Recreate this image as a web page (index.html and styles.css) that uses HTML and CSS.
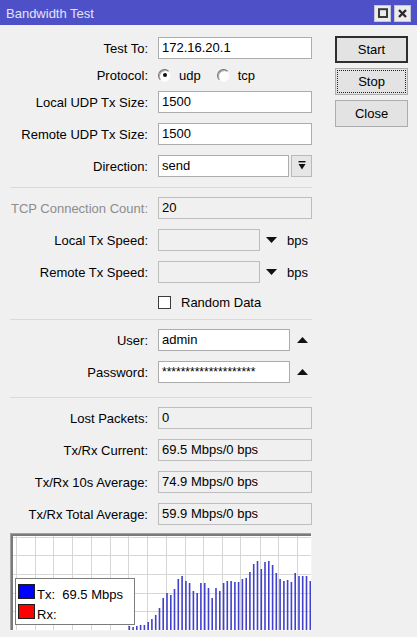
FILE: index.html
```html
<!DOCTYPE html>
<html>
<head>
<meta charset="utf-8">
<title>Bandwidth Test</title>
<link rel="stylesheet" href="styles.css">
</head>
<body>
<div class="window">
  <div class="titlebar">
    <span class="title">Bandwidth Test</span>
    <div class="tb-btns">
      <span class="tb-btn"><svg width="10" height="10" viewBox="0 0 10 10"><rect x="1" y="1.2" width="8" height="7.8" fill="none" stroke="#3a3a3a" stroke-width="2"/></svg></span>
      <span class="tb-btn"><svg width="9" height="9" viewBox="0 0 9 9"><path d="M1 1 L8 8 M8 1 L1 8" stroke="#2a2a2a" stroke-width="2.4"/></svg></span>
    </div>
  </div>
  <div class="content">
    <div class="form">
      <div class="row">
        <div class="label">Test To:</div>
        <div class="field">172.16.20.1</div>
      </div>
      <div class="row short">
        <div class="label">Protocol:</div>
        <span class="radio checked"></span><span class="radio-text">udp</span>
        <span class="radio"></span><span class="radio-text">tcp</span>
      </div>
      <div class="row">
        <div class="label">Local UDP Tx Size:</div>
        <div class="field">1500</div>
      </div>
      <div class="row">
        <div class="label">Remote UDP Tx Size:</div>
        <div class="field">1500</div>
      </div>
      <div class="row">
        <div class="label">Direction:</div>
        <div class="field combo">send</div>
        <div class="drop-btn"><svg width="8" height="10" viewBox="0 0 8 10"><rect x="0.5" y="0" width="7" height="1.4" fill="#111"/><polygon points="0.5,3 7.5,3 4,8.5" fill="#111"/></svg></div>
      </div>
      <div class="sep sep-a"></div>
      <div class="row">
        <div class="label disabled">TCP Connection Count:</div>
        <div class="field ro">20</div>
      </div>
      <div class="row">
        <div class="label">Local Tx Speed:</div>
        <div class="field ro speed"></div>
        <svg class="tri" width="11" height="6" viewBox="0 0 11 6"><polygon points="0,0 11,0 5.5,6" fill="#111"/></svg>
        <span class="unit">bps</span>
      </div>
      <div class="row">
        <div class="label">Remote Tx Speed:</div>
        <div class="field ro speed"></div>
        <svg class="tri" width="11" height="6" viewBox="0 0 11 6"><polygon points="0,0 11,0 5.5,6" fill="#111"/></svg>
        <span class="unit">bps</span>
      </div>
      <div class="row check">
        <div class="label"></div>
        <span class="checkbox"></span><span>Random Data</span>
      </div>
      <div class="sep sep-b"></div>
      <div class="row">
        <div class="label">User:</div>
        <div class="field user">admin</div>
        <svg class="tri up" width="11" height="6" viewBox="0 0 11 6"><polygon points="0,6 11,6 5.5,0" fill="#111"/></svg>
      </div>
      <div class="row">
        <div class="label">Password:</div>
        <div class="field user pass">********************</div>
        <svg class="tri up" width="11" height="6" viewBox="0 0 11 6"><polygon points="0,6 11,6 5.5,0" fill="#111"/></svg>
      </div>
      <div class="sep sep-c"></div>
      <div class="row">
        <div class="label">Lost Packets:</div>
        <div class="field ro">0</div>
      </div>
      <div class="row">
        <div class="label">Tx/Rx Current:</div>
        <div class="field ro">69.5 Mbps/0 bps</div>
      </div>
      <div class="row">
        <div class="label">Tx/Rx 10s Average:</div>
        <div class="field ro">74.9 Mbps/0 bps</div>
      </div>
      <div class="row">
        <div class="label">Tx/Rx Total Average:</div>
        <div class="field ro">59.9 Mbps/0 bps</div>
      </div>
      <div class="graph">
        <svg width="302" height="98" viewBox="0 0 302 98">
          <rect x="0" y="0" width="302" height="98" fill="#ffffff"/>
          <g stroke="#d6d6d6" stroke-width="1">
            <path d="M6.5 0V98M25.5 0V98M43.5 0V98M62.5 0V98M81.5 0V98M100.5 0V98M118.5 0V98M137.5 0V98M156.5 0V98M175.5 0V98M193.5 0V98M212.5 0V98M230.5 0V98M250.5 0V98M268.5 0V98M287.5 0V98"/>
            <path d="M0 4.5H302M0 22.5H302M0 41.5H302M0 60.5H302M0 78.5H302"/>
          </g>
          <g stroke="#4141cc" stroke-width="1.6">
            <path d="M119.3 97V93M123.1 97V94M126.8 97V93M130.6 97V92M134.4 97V92M138.2 97V89M141.9 97V86M145.7 97V82M149.5 97V75M153.2 97V65M157 97V60M160.8 97V62M164.5 97V56M168.3 97V46M172.1 97V43M175.9 97V48M179.6 97V50M183.4 97V58M187.2 97V60M190.9 97V50M194.7 97V50M198.5 97V55M202.2 97V65M206 97V55M209.8 97V58M213.6 97V50M217.3 97V48M221.1 97V48M224.9 97V49M228.6 97V49M232.4 97V46M236.2 97V45M239.9 97V39M243.7 97V31M247.5 97V28M251.3 97V36M255 97V29M258.8 97V28M262.6 97V32M266.3 97V40M270.1 97V46M273.9 97V48M277.6 97V47M281.4 97V49M285.2 97V40M289 97V43M292.7 97V43M296.5 97V43M300.3 97V48"/>
          </g>
          <rect x="0" y="0" width="302" height="1" fill="#a3a3a3"/>
          <rect x="0" y="0" width="1" height="98" fill="#a3a3a3"/>
          <rect x="1" y="1" width="301" height="2" fill="#7a7a7a"/>
          <rect x="1" y="1" width="2" height="97" fill="#7a7a7a"/>
          <rect x="0" y="97" width="302" height="1" fill="#f4f4f4"/>
          <rect x="301" y="0" width="1" height="98" fill="#f4f4f4"/>
        </svg>
        <div class="legend">
          <div class="legend-row"><span class="swatch tx"></span><span class="legend-text">Tx:  69.5 Mbps</span></div>
          <div class="legend-row"><span class="swatch rx"></span><span class="legend-text">Rx:</span></div>
        </div>
      </div>
    </div>
    <div class="actions">
      <button class="btn default">Start</button>
      <button class="btn focused">Stop</button>
      <button class="btn">Close</button>
    </div>
  </div>
</div>
</body>
</html>
```

FILE: styles.css
```css
html, body {
  margin: 0;
  padding: 0;
}
body {
  background: #f0f0f0;
  font-family: "Liberation Sans", Arial, sans-serif;
  font-size: 13px;
  color: #000000;
}
.window {
  width: 417px;
  height: 637px;
  overflow: hidden;
}
.titlebar {
  height: 25px;
  background: #4e50c8;
  display: flex;
  align-items: center;
  padding: 0 6px;
  box-sizing: border-box;
}
.title {
  flex: 1;
  color: #e2e2fb;
  padding-top: 2px;
}
.tb-btns {
  display: flex;
  gap: 3px;
  margin-top: 1px;
}
.tb-btn {
  width: 17px;
  height: 17px;
  box-sizing: border-box;
  background: #ececec;
  border: 1px solid #c4c4d4;
  display: flex;
  align-items: center;
  justify-content: center;
}
.content {
  display: flex;
  padding: 7px 9px 0 10px;
}
.form {
  width: 302px;
  flex-shrink: 0;
}
.actions {
  margin-left: 23px;
  width: 73px;
  padding-top: 4px;
  display: flex;
  flex-direction: column;
  gap: 5px;
}
.row {
  display: flex;
  align-items: center;
  height: 32px;
}
.row.short {
  height: 22px;
}
.row.check {
  height: 28px;
}
.label {
  width: 138px;
  flex-shrink: 0;
  margin-right: 10px;
  display: flex;
  justify-content: flex-end;
  white-space: nowrap;
}
.label.disabled {
  color: #8c8c8c;
}
.field {
  width: 154px;
  height: 22px;
  box-sizing: border-box;
  border: 1px solid #acacac;
  background: #ffffff;
  padding: 0 3px;
  line-height: 20px;
  white-space: nowrap;
  overflow: hidden;
  flex-shrink: 0;
}
.field.ro {
  background: #f0f0f0;
  border-color: #bdbdbd;
}
.field.combo {
  width: 131px;
}
.field.speed {
  width: 102px;
}
.field.user {
  width: 132px;
}
.field.pass {
  font-size: 12px;
}
.drop-btn {
  width: 21px;
  height: 22px;
  margin-left: 2px;
  box-sizing: border-box;
  border: 1px solid #b9b9b9;
  background: #e6e6e6;
  display: flex;
  align-items: center;
  justify-content: center;
}
.tri {
  margin-left: 6px;
  flex-shrink: 0;
}
.tri.up {
  margin-left: 7px;
}
.unit {
  margin-left: 10px;
}
.radio {
  width: 13px;
  height: 13px;
  box-sizing: border-box;
  border-radius: 50%;
  border: 1px solid;
  border-color: #6e6e6e #f4f4f4 #f8f8f8 #6e6e6e;
  background: #ffffff;
  box-shadow: inset 1px 1px 0 #a8a8a8;
  display: flex;
  align-items: center;
  justify-content: center;
  flex-shrink: 0;
}
.radio.checked::after {
  content: "";
  width: 4px;
  height: 4px;
  border-radius: 50%;
  background: #111;
}
.radio-text {
  margin-left: 8px;
  margin-right: 16px;
}
.checkbox {
  width: 13px;
  height: 13px;
  box-sizing: border-box;
  border: 1px solid #3c3c3c;
  background: #ffffff;
  margin-right: 10px;
  flex-shrink: 0;
}
.sep {
  height: 1px;
  background: #d9d9d9;
}
.sep-a {
  margin: 5px 0 4px;
}
.sep-b {
  margin: 3px 0 4px;
}
.sep-c {
  margin: 9px 0 4px;
}
.graph {
  position: relative;
  width: 302px;
  height: 98px;
  margin-top: 3px;
}
.graph svg {
  display: block;
}
.legend {
  position: absolute;
  left: 5px;
  top: 45px;
  width: 120px;
  height: 47px;
  box-sizing: border-box;
  background: #ffffff;
  border: 1px solid #7c7c7c;
  padding: 5px 0 0 2px;
  display: flex;
  flex-direction: column;
  gap: 5px;
}
.legend-row {
  display: flex;
  height: 15px;
}
.swatch {
  width: 17px;
  height: 15px;
  box-sizing: border-box;
  border: 1px solid #1e1e1e;
  flex-shrink: 0;
}
.swatch.tx {
  background: #0000ff;
}
.swatch.rx {
  background: #ff0000;
}
.legend-text {
  margin-left: 2px;
  white-space: pre;
  line-height: 15px;
  position: relative;
  top: 3px;
}
.btn {
  width: 73px;
  height: 27px;
  box-sizing: border-box;
  background: #e3e3e3;
  border: 1px solid #adadad;
  font-family: "Liberation Sans", Arial, sans-serif;
  font-size: 13px;
  color: #000;
  padding: 0;
  margin: 0;
}
.btn.default {
  border: 2px solid #2e2e2e;
}
.btn.focused {
  outline: 1px dotted #222;
  outline-offset: -3px;
}
```
